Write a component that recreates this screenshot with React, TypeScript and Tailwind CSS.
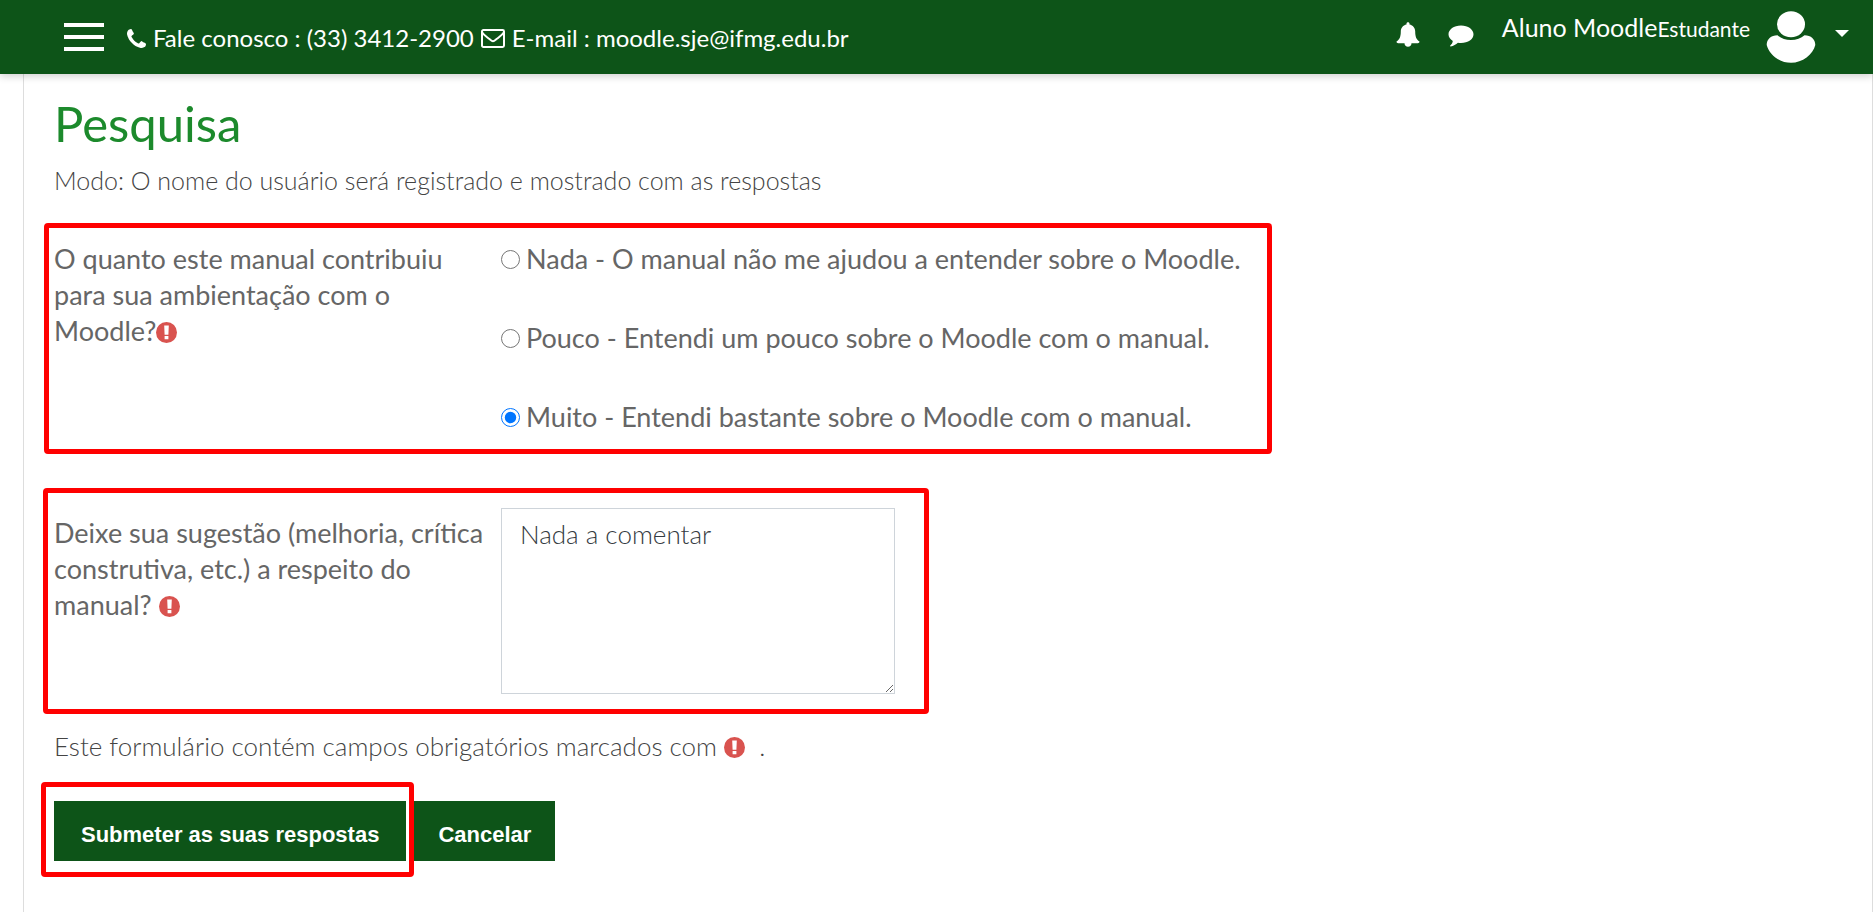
import { useState } from 'react'

const OPTIONS = [
  { value: 'nada', label: 'Nada - O manual não me ajudou a entender sobre o Moodle.' },
  { value: 'pouco', label: 'Pouco - Entendi um pouco sobre o Moodle com o manual.' },
  { value: 'muito', label: 'Muito - Entendi bastante sobre o Moodle com o manual.' },
]

function PhoneIcon() {
  return (
    <svg viewBox="0 0 1408 1408" className="w-[19px] h-[19px] shrink-0" fill="currentColor" aria-hidden="true">
      <path d="M1408 1112q0 27-10 70.5t-21 68.5q-21 50-122 106-94 51-186 51-27 0-53-3.5t-57.5-12.5-47-14.5-55.5-20.5-49-18q-98-35-175-83-127-79-264-216t-216-264q-48-77-83-175-3-9-18-49t-20.5-55.5-14.5-47-12.5-57.5-3.5-53q0-92 51-186 56-101 106-122 25-11 68.5-21t70.5-10q14 0 21 3 18 6 53 76 11 19 30 54t35 63.5 31 53.5q3 4 17.5 25t21.5 35.5 7 28.5q0 20-28.5 50t-62 55-62 53-28.5 46q0 9 5 22.5t8.5 20.5 14 24 11.5 19q76 137 174 235t235 174q2 1 19 11.5t24 14 20.5 8.5 22.5 5q18 0 46-28.5t53-62 55-62 50-28.5q14 0 28.5 7t35.5 21.5 25 17.5q25 15 53.5 31t63.5 35 54 30q70 35 76 53 3 7 3 21z" />
    </svg>
  )
}

function EnvelopeIcon() {
  return (
    <svg viewBox="0 0 24 19" className="w-6 h-[19px] shrink-0" fill="none" stroke="currentColor" strokeWidth="2" aria-hidden="true">
      <rect x="1" y="1" width="22" height="17" rx="1.4" />
      <path d="M1 3.2C2.6 5.8 5.6 7.7 8.5 10.1C10.4 11.7 11 12.3 12 12.3C13 12.3 13.6 11.7 15.5 10.1C18.4 7.7 21.4 5.8 23 3.2" />
    </svg>
  )
}

function BellIcon() {
  return (
    <svg viewBox="0 0 24 25" className="w-6 h-[25px]" fill="currentColor" aria-hidden="true">
      <path d="M12 0.3C12.9 0.3 13.5 0.9 13.5 1.7V2.4C17 3.1 19.2 5.9 19.2 9.3C19.2 14.7 20.3 17.5 23.5 19.5C23.5 20.5 22.8 21.2 21.8 21.2H15.5C15.5 23.2 14 24.8 12 24.8C10 24.8 8.5 23.2 8.5 21.2H2.2C1.2 21.2 0.5 20.5 0.5 19.5C3.7 17.5 4.8 14.7 4.8 9.3C4.8 5.9 7 3.1 10.5 2.4V1.7C10.5 0.9 11.1 0.3 12 0.3Z" />
    </svg>
  )
}

function CommentIcon() {
  return (
    <svg viewBox="0 0 26 22" className="w-[26px] h-[22px]" fill="currentColor" aria-hidden="true">
      <path d="M13 0.5C20.2 0.5 25.5 4.5 25.5 9.3C25.5 14.2 20.2 18.1 13 18.1C11.9 18.1 10.9 18 9.9 17.8C7.9 19.7 5.5 21 2.7 21.4C2.1 21.5 1.9 20.9 2.3 20.5C3.5 19.3 4.5 18.3 4.8 16C2.2 14.4 0.5 12 0.5 9.3C0.5 4.5 5.8 0.5 13 0.5Z" />
    </svg>
  )
}

function AvatarIcon() {
  return (
    <svg viewBox="0 0 50 52" className="w-[50px] h-[52px]" fill="currentColor" aria-hidden="true">
      <ellipse cx="25" cy="13.2" rx="14" ry="13" />
      <path d="M11.5 24.3C15 27.2 19.6 29 25 29C30.4 29 35 27.2 38.5 24.3C45 24.3 49.3 28.5 49.3 34C47 43.5 36.5 51.8 25 51.8C13.5 51.8 3 43.5 0.7 34C0.7 28.5 5 24.3 11.5 24.3Z" />
    </svg>
  )
}

function RequiredIcon() {
  return (
    <svg viewBox="0 0 21 21" className="inline-block w-[21px] h-[21px] align-[-2px]" role="img" aria-label="Obrigatório">
      <circle cx="10.5" cy="10.5" r="10.5" fill="#d9534f" />
      <path d="M8.2 3.6H12.8L12.4 12.8H8.6Z M8.6 14H12.4V17.3H8.6Z" fill="#fff" />
    </svg>
  )
}

function Header() {
  return (
    <header className="relative z-10 flex items-center h-[74px] pl-16 pr-6 bg-[#0d5418] text-white shadow-[0_2px_8px_rgba(0,0,0,0.2)]">
      <button type="button" aria-label="Menu" className="flex flex-col gap-2 w-10 shrink-0">
        <span className="h-1 bg-white" />
        <span className="h-1 bg-white" />
        <span className="h-1 bg-white" />
      </button>

      <div className="flex items-center gap-[7px] ml-[23px] pt-0.5 text-2xl whitespace-nowrap">
        <PhoneIcon />
        <span>Fale conosco : (33) 3412-2900</span>
        <EnvelopeIcon />
        <span>E-mail : moodle.sje@ifmg.edu.br</span>
      </div>

      <div className="flex items-center ml-auto">
        <button type="button" aria-label="Notificações" className="mr-7 mb-1.5"><BellIcon /></button>
        <button type="button" aria-label="Mensagens" className="mr-7 mb-0.5"><CommentIcon /></button>
        <button type="button" className="flex items-center">
          <span className="mb-[18px] text-[25px] leading-8 whitespace-nowrap">
            Aluno Moodle<span className="text-[21px]">Estudante</span>
          </span>
          <span className="ml-4"><AvatarIcon /></span>
          <svg viewBox="0 0 14 7" className="w-[14px] h-[7px] ml-[19px] mb-2" fill="currentColor" aria-hidden="true">
            <path d="M0 0H14L7 7Z" />
          </svg>
        </button>
      </div>
    </header>
  )
}

export default function App() {
  const [answer, setAnswer] = useState('muito')
  const [comment, setComment] = useState('Nada a comentar')

  return (
    <div className="min-h-screen flex flex-col bg-white text-[#666666] font-['Century_Gothic',Lato,sans-serif]">
      <Header />

      <main className="grow ml-[23px] pl-5 border-x border-[#dddddd]">
        <h1 className="ml-[10px] pt-5 text-[49px] leading-[58px] text-[#1c8a2c]">Pesquisa</h1>
        <p className="ml-[10px] mt-[10px] text-[25px] leading-9 font-light text-[#444444]">
          Modo: O nome do usuário será registrado e mostrado com as respostas
        </p>

        <form onSubmit={e => e.preventDefault()}>
          {/* Pergunta 1 */}
          <fieldset
            aria-labelledby="q1"
            className="flex w-[1228px] max-w-full h-[231px] mt-[25px] pl-[5px] pt-[13px] border-5 border-[#ff0000] rounded-sm"
          >
            <div id="q1" className="w-[447px] shrink-0 pr-10 text-[27px] leading-9">
              O quanto este manual contribuiu para sua ambientação com o Moodle?<RequiredIcon />
            </div>
            <div className="flex flex-col gap-[43px]">
              {OPTIONS.map(o => (
                <label key={o.value} className="flex items-center gap-1.5 text-[27px] leading-9 whitespace-nowrap">
                  <input
                    type="radio"
                    name="contribuicao"
                    value={o.value}
                    checked={answer === o.value}
                    onChange={() => setAnswer(o.value)}
                    className="w-[19px] h-[19px] shrink-0"
                  />
                  {o.label}
                </label>
              ))}
            </div>
          </fieldset>

          {/* Pergunta 2 */}
          <div className="flex w-[886px] max-w-full h-[226px] mt-[34px] -ml-px pl-1.5 pt-[15px] border-5 border-[#ff0000] rounded-sm">
            <label htmlFor="q2" className="w-[447px] shrink-0 pr-4 pt-[7px] text-[27px] leading-9">
              Deixe sua sugestão (melhoria, crítica construtiva, etc.) a respeito do manual? <RequiredIcon />
            </label>
            <textarea
              id="q2"
              value={comment}
              onChange={e => setComment(e.target.value)}
              className="w-[394px] h-[186px] px-[18px] py-[7px] text-[26px] leading-9 font-light text-[#343a40] bg-white border border-[#ced4da] resize"
            />
          </div>

          <p className="ml-[10px] mt-[14px] text-[26px] leading-9 font-light text-[#444444]">
            Este formulário contém campos obrigatórios marcados com <RequiredIcon /> &nbsp;.
          </p>

          <div className="flex items-start -ml-[3px] mt-[18px] font-['Liberation_Sans',Arial,sans-serif] text-[22px] font-bold text-white">
            <div className="pl-2 pr-[3px] pt-[14px] pb-[11px] border-5 border-[#ff0000] rounded-sm">
              <button type="submit" className="block h-[60px] px-[27px] pt-1.5 bg-[#0d5418]">Submeter as suas respostas</button>
            </div>
            <button type="button" className="h-[60px] mt-[19px] px-6 pt-1.5 bg-[#0d5418]">Cancelar</button>
          </div>
        </form>
      </main>
    </div>
  )
}
